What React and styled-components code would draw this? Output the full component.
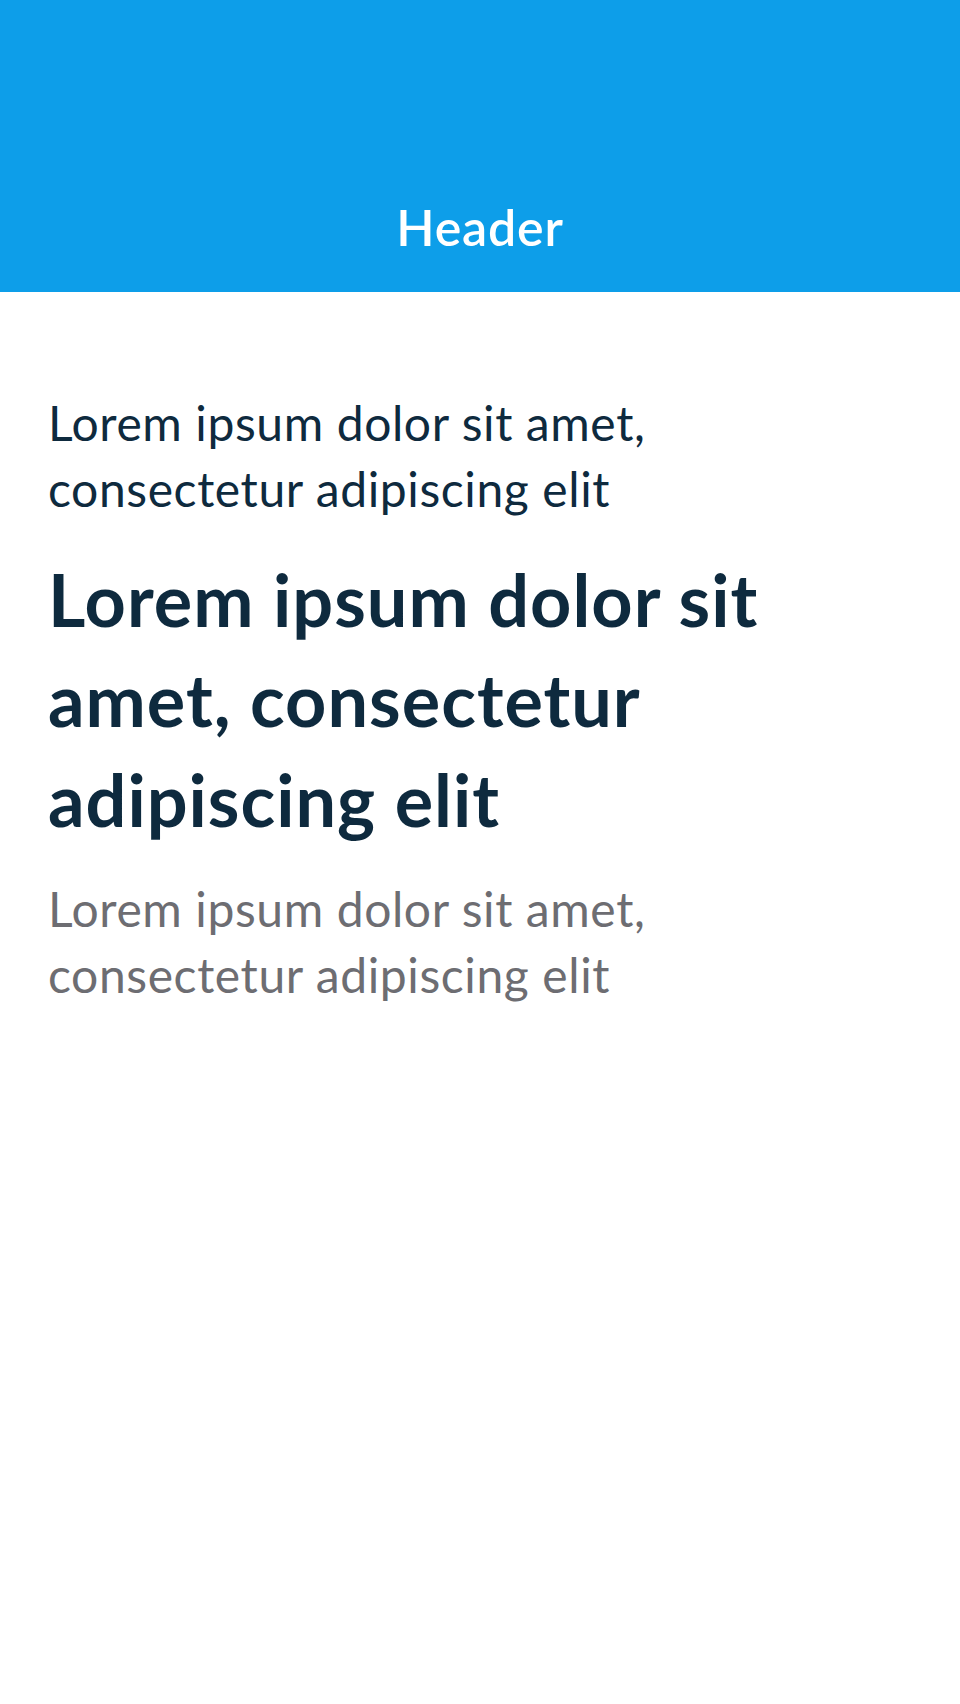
import React from "react";
import styled, { createGlobalStyle } from "styled-components";

const GlobalStyle = createGlobalStyle`
  body {
    margin: 0;
    background: #ffffff;
    font-family: "Lato", "Noto Sans", sans-serif;
  }
`;

const App = () => {
  return (
    <Page>
      <GlobalStyle />
      <Header>
        <Title>Header</Title>
      </Header>
      <Content>
        <Text>Lorem ipsum dolor sit amet, consectetur adipiscing elit</Text>
        <Heading>Lorem ipsum dolor sit amet, consectetur adipiscing elit</Heading>
        <Text muted>Lorem ipsum dolor sit amet, consectetur adipiscing elit</Text>
      </Content>
    </Page>
  );
};

const Page = styled.div`
  min-height: 100vh;
  background: #ffffff;
`;

const Header = styled.header`
  height: 292px;
  box-sizing: border-box;
  background: #0d9ee9;
  display: flex;
  justify-content: center;
  align-items: flex-end;
  padding-bottom: 32px;
`;

const Title = styled.h1`
  margin: 0;
  color: #ffffff;
  font-size: 50px;
  font-weight: 600;
  letter-spacing: 0.8px;
  line-height: 66px;
`;

const Content = styled.main`
  display: flex;
  flex-direction: column;
  gap: 27px;
  padding: 98px 48px;
  max-width: 720px;
`;

const Text = styled.p`
  margin: 0;
  font-size: 48px;
  line-height: 66px;
  letter-spacing: 0.6px;
  color: ${(p) => (p.muted ? "#6d6d72" : "#0e2a3e")};
`;

const Heading = styled.h2`
  margin: 0;
  font-size: 72px;
  font-weight: 700;
  line-height: 100px;
  letter-spacing: 1px;
  color: #0e2a3e;
`;

export default App;
